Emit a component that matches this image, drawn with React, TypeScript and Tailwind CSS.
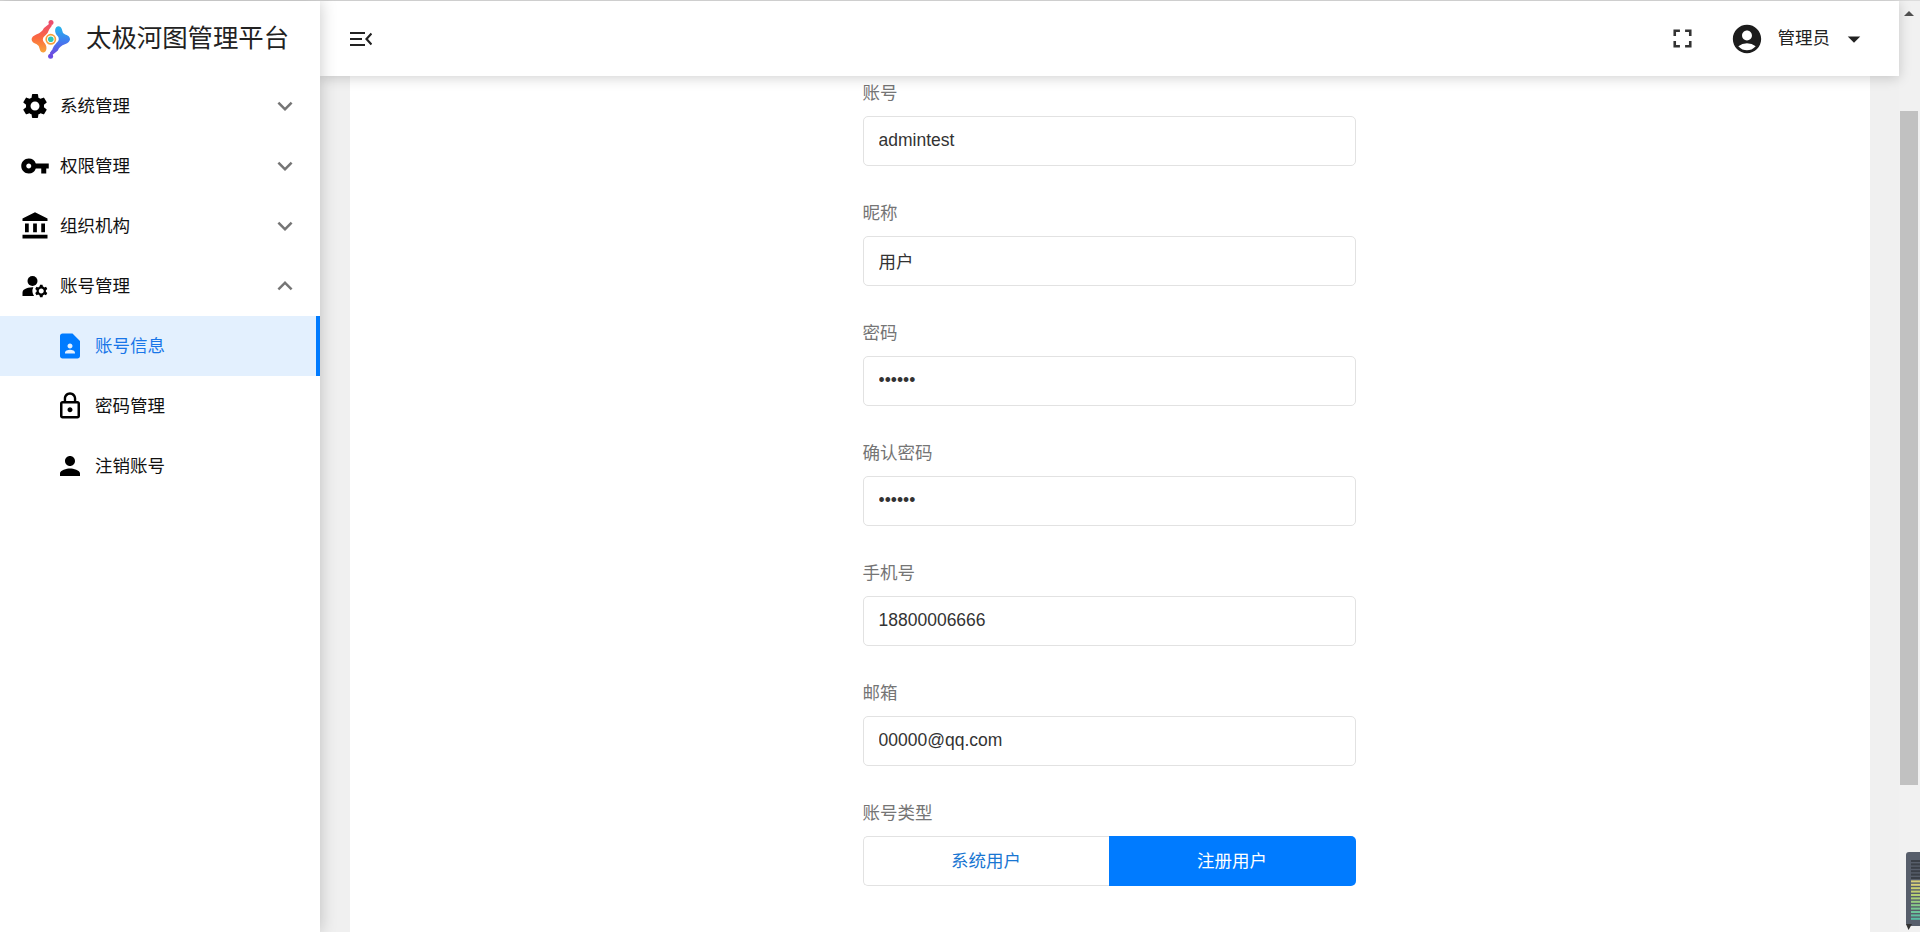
import {
  MdSettings,
  MdVpnKey,
  MdAccountBalance,
  MdManageAccounts,
  MdContactPage,
  MdLockOutline,
  MdPerson,
  MdExpandMore,
  MdExpandLess,
  MdFullscreen,
  MdAccountCircle,
  MdArrowDropDown,
} from 'react-icons/md';

const font = "font-['Liberation_Sans','Noto_Sans_CJK_SC',sans-serif]";

function Logo() {
  const lobe =
    'M18.5 5.5 L13.5 9.5 Q11.5 14 6 16 Q1.4 18 1.4 20.3 Q1.4 23 6 24.5 Q9 25.8 9.5 30 Q10.5 33.4 13 32.4 Q15 31.5 14.6 28 Q14.2 25.8 13 24.6 Q11 23 11 20.3 Q11 17.6 14 15.6 Q16.5 13.4 17.5 10 L20 6.5 Z';
  return (
    <svg viewBox="0 0 40 40" className="h-10 w-10 shrink-0">
      <defs>
        <linearGradient id="warm" x1="0" y1="0" x2="0" y2="1">
          <stop offset="0" stopColor="#ee4f6b" />
          <stop offset="0.5" stopColor="#fb6a3f" />
          <stop offset="1" stopColor="#f9a23a" />
        </linearGradient>
        <linearGradient id="cool" x1="0" y1="0" x2="0" y2="1">
          <stop offset="0" stopColor="#6a4be0" />
          <stop offset="0.5" stopColor="#3f7ff0" />
          <stop offset="1" stopColor="#25b4ec" />
        </linearGradient>
      </defs>
      <path d={lobe} fill="url(#warm)" stroke="url(#warm)" strokeWidth="1.6" strokeLinejoin="round" />
      <path d={lobe} fill="url(#cool)" stroke="url(#cool)" strokeWidth="1.6" strokeLinejoin="round" transform="rotate(180 19.8 20.3)" />
      <circle cx="20" cy="3.4" r="2.5" fill="#ec4f6e" />
      <circle cx="19.6" cy="37.2" r="2.5" fill="#6a4be0" />
      <circle cx="19.8" cy="20.3" r="4.6" fill="none" stroke="#f8a13a" strokeWidth="1.7" />
      <circle cx="19.8" cy="20.3" r="2.8" fill="#2cc9b5" />
    </svg>
  );
}

const menu = [
  { label: '系统管理', icon: MdSettings, open: false },
  { label: '权限管理', icon: MdVpnKey, open: false },
  { label: '组织机构', icon: MdAccountBalance, open: false },
  { label: '账号管理', icon: MdManageAccounts, open: true },
];

const subMenu = [
  { label: '账号信息', icon: MdContactPage, active: true },
  { label: '密码管理', icon: MdLockOutline, active: false },
  { label: '注销账号', icon: MdPerson, active: false },
];

function Sidebar() {
  return (
    <aside className="relative z-20 flex w-[320px] shrink-0 flex-col bg-white shadow-[0_0_16px_rgba(0,0,0,0.22)]">
      <div className="flex h-[75px] items-center pl-[31px]">
        <Logo />
        <span className="ml-[15px] text-[25.4px] leading-none text-[#222]">太极河图管理平台</span>
      </div>
      {menu.map((item) => {
        const Chevron = item.open ? MdExpandLess : MdExpandMore;
        return (
          <div key={item.label} className="flex h-[60px] items-center pl-[20px] pr-[20px]">
            <item.icon className="h-[30px] w-[30px] shrink-0 text-black" />
            <span className="ml-[10px] flex-1 text-[17.5px] text-[#111]">{item.label}</span>
            <Chevron className="h-[30px] w-[30px] text-[#757575]" />
          </div>
        );
      })}
      {subMenu.map((item) => (
        <div
          key={item.label}
          className={
            item.active
              ? 'flex h-[60px] items-center border-r-4 border-[#007bff] bg-[#e3f0fe] pl-[55px] text-[#1976e8]'
              : 'flex h-[60px] items-center pl-[55px] text-[#111]'
          }
        >
          <item.icon className={item.active ? 'h-[30px] w-[30px] text-[#007bff]' : 'h-[30px] w-[30px] text-black'} />
          <span className="ml-[10px] text-[17.5px]">{item.label}</span>
        </div>
      ))}
    </aside>
  );
}

function Header() {
  return (
    <header className="relative z-10 flex h-[75px] shrink-0 items-center bg-white pl-[30px] pr-[30px] shadow-[0_2px_12px_rgba(0,0,0,0.18)]">
      <svg viewBox="0 0 22 14" className="h-[14px] w-[22px]" fill="none" stroke="#222" strokeWidth="2.2">
        <path d="M0 1h15M0 7h12M0 13h15" />
        <path d="M21.5 1.5 L16.5 7 L21.5 12.5" />
      </svg>
      <div className="flex-1" />
      <MdFullscreen className="h-[31px] w-[31px] text-[#333]" />
      <MdAccountCircle className="ml-[32px] h-[34px] w-[34px] text-[#1c1c1c]" />
      <span className="ml-[14px] text-[17.5px] text-[#222]">管理员</span>
      <MdArrowDropDown className="ml-[9px] h-[30px] w-[30px] text-[#222]" />
    </header>
  );
}

function Field({ label, value, type = 'text' }: { label: string; value: string; type?: string }) {
  return (
    <div className="mb-[34px]">
      <div className="mb-[10px] h-[26px] text-[17.5px] leading-[26px] text-[#757575]">{label}</div>
      <input
        readOnly
        type={type}
        defaultValue={value}
        className="box-border block h-[50px] w-full rounded-[5px] border border-[#e2e2e2] bg-white pb-[2px] pl-[15px] pr-[14px] text-[17.5px] text-[#333] outline-none"
      />
    </div>
  );
}

function AccountForm() {
  return (
    <div className="mx-auto w-[493px] pt-[4px]">
      <Field label="账号" value="admintest" />
      <Field label="昵称" value="用户" />
      <Field label="密码" value="123456" type="password" />
      <Field label="确认密码" value="123456" type="password" />
      <Field label="手机号" value="18800006666" />
      <Field label="邮箱" value="00000@qq.com" />
      <div>
        <div className="mb-[10px] h-[26px] text-[17.5px] leading-[26px] text-[#757575]">账号类型</div>
        <div className="flex h-[50px] text-[17.5px]">
          <div className="flex w-[246px] shrink-0 items-center justify-center rounded-l-[5px] border border-r-0 border-[#e2e2e2] bg-white text-[#1976d2]">
            系统用户
          </div>
          <div className="flex flex-1 items-center justify-center rounded-r-[5px] bg-[#007bff] text-white">
            注册用户
          </div>
        </div>
      </div>
    </div>
  );
}

function FakeScrollbar() {
  return (
    <div className="relative z-0 flex w-[21px] shrink-0 flex-col items-center bg-[#f1f1f1] pl-[1px] pr-[2px]">
      <div className="mt-[10px] h-0 w-0 border-x-[5px] border-b-[5px] border-x-transparent border-b-[#505050]" />
      <div className="mt-[95px] h-[674px] w-full bg-[#c1c1c1]" />
    </div>
  );
}

function MeterWidget() {
  const colors = ['#3a3f47', '#3a3f47', '#3a3f47', '#3a3f47', '#3a3f47', '#3a3f47', '#d8cf78', '#d8cf78', '#c9cf70', '#c2cf70', '#b4cf72', '#a8cf78', '#98cf80', '#88cc88', '#78c890', '#6cc49a', '#60c0a0', '#58bca4'];
  return (
    <svg viewBox="0 0 14 78" className="absolute bottom-[2px] right-0 z-30 h-[78px] w-[14px]">
      <path d="M3 0 H14 V74 H3 Q0 74 0 71 V3 Q0 0 3 0 Z" fill="#575e6b" />
      {colors.map((c, i) => (
        <rect key={i} x="5" y={8 + i * 3.4} width="9" height="2" fill={c} />
      ))}
      <path d="M0 72 H6 L2.5 78 Z" fill="#333" />
    </svg>
  );
}

export default function App() {
  return (
    <div className={`${font} relative flex h-[932px] w-full flex-col overflow-hidden bg-white`}>
      <div className="h-px shrink-0 bg-[#dcdcdc]" />
      <div className="flex min-h-0 flex-1">
        <Sidebar />
        <main className="flex min-w-0 flex-1 flex-col bg-[#f0f0f0]">
          <Header />
          <div className="min-h-0 flex-1 pl-[30px] pr-[29px]">
            <div className="h-full bg-white pr-[2px]">
              <AccountForm />
            </div>
          </div>
        </main>
        <FakeScrollbar />
      </div>
      <MeterWidget />
    </div>
  );
}
